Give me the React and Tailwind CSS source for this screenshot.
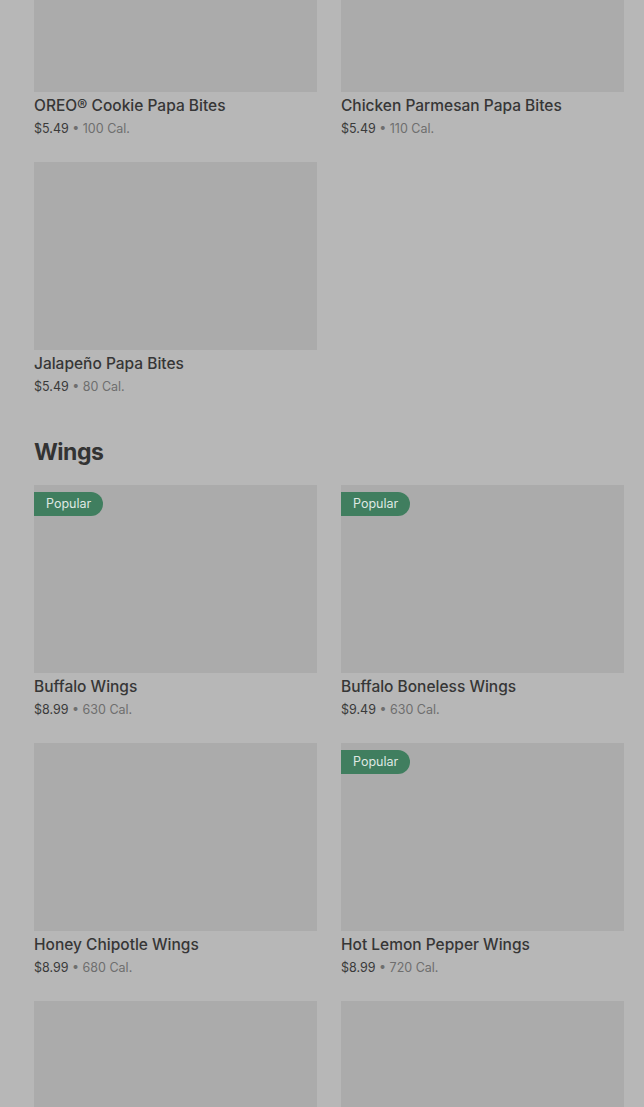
const papaBites = [
  { name: "OREO® Cookie Papa Bites", price: "$5.49", cal: "100 Cal." },
  { name: "Chicken Parmesan Papa Bites", price: "$5.49", cal: "110 Cal." },
  { name: "Jalapeño Papa Bites", price: "$5.49", cal: "80 Cal." },
];

const wings = [
  { name: "Buffalo Wings", price: "$8.99", cal: "630 Cal.", popular: true },
  { name: "Buffalo Boneless Wings", price: "$9.49", cal: "630 Cal.", popular: true },
  { name: "Honey Chipotle Wings", price: "$8.99", cal: "680 Cal." },
  { name: "Hot Lemon Pepper Wings", price: "$8.99", cal: "720 Cal.", popular: true },
  { name: "", price: "", cal: "" },
  { name: "", price: "", cal: "" },
];

function Card({ item }) {
  return (
    <div className="h-[234px]">
      <div className="relative h-[188px] bg-[#ababab]">
        {item.popular && (
          <span className="absolute left-0 top-[7px] flex h-[24px] items-center rounded-r-full bg-[#407e5f] pl-[12px] pr-[12px] text-[12.5px] text-[#dfe8e3]">
            Popular
          </span>
        )}
      </div>
      {item.name && (
        <>
          <div className="mt-[3px] text-[15.5px] leading-[22px] font-medium text-[#363636]">
            {item.name}
          </div>
          <div className="mt-[2px] text-[12.5px] leading-[20px] text-[#3a3a3a]">
            {item.price}
            <span className="text-[#6e6e6e]"> • {item.cal}</span>
          </div>
        </>
      )}
    </div>
  );
}

export default function App() {
  return (
    <div
      className="h-[1107px] overflow-hidden bg-[#b7b7b7] pl-[34px] pr-[20px]"
      style={{ fontFamily: "Inter, 'Noto Sans', sans-serif" }}
    >
      <div className="-mt-[96px] grid grid-cols-2 gap-x-6 gap-y-6">
        {papaBites.map((item) => (
          <Card key={item.name} item={item} />
        ))}
      </div>

      <h2 className="mt-[40px] text-[23px] leading-[32px] font-bold tracking-[-0.5px] text-[#333]">
        Wings
      </h2>
      <div className="mt-[17px] grid grid-cols-2 gap-x-6 gap-y-6">
        {wings.map((item, i) => (
          <Card key={i} item={item} />
        ))}
      </div>
    </div>
  );
}
